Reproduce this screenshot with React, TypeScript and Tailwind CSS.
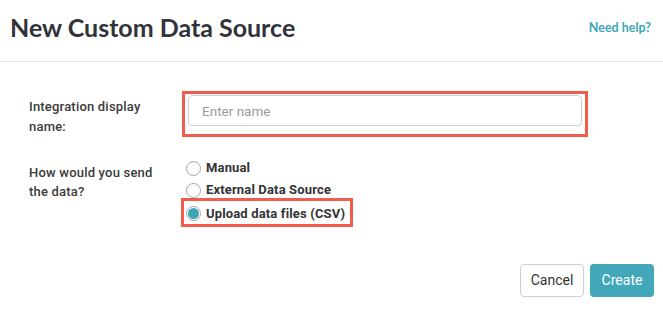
import { useState } from 'react';

const options = ['Manual', 'External Data Source', 'Upload data files (CSV)'];

function Radio({ checked }: { checked: boolean }) {
  return (
    <span className="flex h-[15px] w-[15px] shrink-0 items-center justify-center rounded-full border border-[#a6a6a6] bg-white">
      {checked && <span className="h-[11px] w-[11px] rounded-full bg-[#3ea6b8]" />}
    </span>
  );
}

export default function App() {
  const [selected, setSelected] = useState(2);
  const [name, setName] = useState('');

  return (
    <div className="h-[316px] w-[663px] bg-white font-['Roboto',sans-serif] text-[#333]">
      <div className="flex h-[62px] items-start justify-between border-b border-[#e4e4e4] px-[10px] pt-[11px]">
        <h1 className="font-['Lato',sans-serif] text-[25px] font-bold leading-[32px] text-[#30343a]">
          New Custom Data Source
        </h1>
        <a
          href="#"
          className="mr-[2px] pt-[9px] font-['Lato',sans-serif] text-[12.5px] font-bold leading-[16px] text-[#3ea6b8]"
        >
          Need help?
        </a>
      </div>

      <div className="pl-[29px] pr-[9px]">
        <div className="mt-[29px] flex">
          <label
            htmlFor="name"
            className="mt-[6px] w-[153px] shrink-0 text-[13px] font-medium leading-[20px] tracking-[0.2px] text-[#3a3a3a]"
          >
            Integration display
            <br />
            name:
          </label>
          <div className="w-[406px] border-[3px] border-[#f25c4c] px-[3px] pt-px">
            <input
              id="name"
              value={name}
              onChange={(e) => setName(e.target.value)}
              placeholder="Enter name"
              className="h-[31px] w-full rounded-[4px] border border-[#cfcfcf] px-[13px] text-[13.5px] text-[#333] outline-none placeholder:text-[#9a9a9a]"
            />
          </div>
        </div>

        <div className="mt-[20px] flex">
          <div className="mt-[6px] w-[153px] shrink-0 text-[13px] font-medium leading-[19px] tracking-[0.2px] text-[#3a3a3a]">
            How would you send
            <br />
            the data?
          </div>
          <div className="flex flex-col">
            {options.map((opt, i) => {
              const row = (
                <button
                  type="button"
                  onClick={() => setSelected(i)}
                  className="flex items-center gap-[5px] text-[13px] font-bold leading-[16px] tracking-[0.15px] text-[#333]"
                >
                  <Radio checked={selected === i} />
                  <span>{opt}</span>
                </button>
              );
              if (i === 2) {
                return (
                  <div
                    key={opt}
                    className="-ml-[1px] -mt-[3px] flex h-[29px] w-[172px] items-center border-[3px] border-[#f25c4c] pl-[2px] pt-[2px]"
                  >
                    {row}
                  </div>
                );
              }
              return (
                <div key={opt} className="flex h-[22px] items-center pl-[4px]">
                  {row}
                </div>
              );
            })}
          </div>
        </div>

        <div className="mt-[37px] flex justify-end gap-[6px]">
          <button className="h-[33px] w-[64px] rounded-[4px] border border-[#cfcfcf] bg-white text-[14px] text-[#333]">
            Cancel
          </button>
          <button className="h-[33px] w-[64px] rounded-[4px] bg-[#42a7b8] text-[14px] text-white">
            Create
          </button>
        </div>
      </div>
    </div>
  );
}
